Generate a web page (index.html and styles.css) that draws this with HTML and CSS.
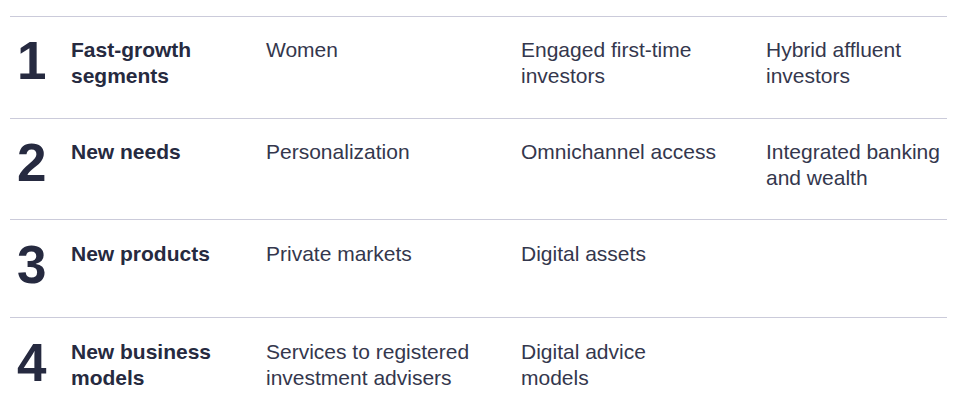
FILE: index.html
```html
<!DOCTYPE html>
<html lang="en">
<head>
<meta charset="utf-8">
<title>Growth opportunities</title>
<link rel="stylesheet" href="styles.css">
</head>
<body>
<div class="table">
  <div class="row r1">
    <div class="num">1</div>
    <div class="label">Fast-growth segments</div>
    <div class="cell c2">Women</div>
    <div class="cell c3">Engaged first-time investors</div>
    <div class="cell c4">Hybrid affluent investors</div>
  </div>
  <div class="row r2">
    <div class="num">2</div>
    <div class="label">New needs</div>
    <div class="cell c2">Personalization</div>
    <div class="cell c3">Omnichannel access</div>
    <div class="cell c4">Integrated banking and wealth</div>
  </div>
  <div class="row r3">
    <div class="num">3</div>
    <div class="label">New products</div>
    <div class="cell c2">Private markets</div>
    <div class="cell c3">Digital assets</div>
    <div class="cell c4"></div>
  </div>
  <div class="row r4">
    <div class="num">4</div>
    <div class="label">New business models</div>
    <div class="cell c2">Services to registered investment advisers</div>
    <div class="cell c3">Digital advice models</div>
    <div class="cell c4"></div>
  </div>
</div>
</body>
</html>
```
FILE: styles.css
```css
html, body {
  margin: 0;
  padding: 0;
  background: #ffffff;
}
body {
  padding: 16px 12px 0 10px;
  font-family: "Liberation Sans", Arial, sans-serif;
  color: #2a2d43;
}
.table {
  display: flex;
  flex-direction: column;
  width: 937px;
}
.row {
  display: grid;
  grid-template-columns: 61px 195px 255px 245px 181px;
  box-sizing: border-box;
  border-top: 1px solid #cbcbda;
  padding-top: 20px;
  align-items: start;
}
.r1 { height: 102px; }
.r2 { height: 101px; }
.r3 { height: 98px; padding-top: 21px; }
.r4 { height: 93px; padding-top: 21px; }
.num {
  font-size: 53px;
  font-weight: 700;
  line-height: 53px;
  padding-left: 7px;
  margin-top: -3px;
  color: #262a40;
}
.label {
  font-size: 21px;
  font-weight: 700;
  line-height: 26px;
  color: #262a40;
  padding-right: 40px;
}
.cell {
  font-size: 21px;
  line-height: 26px;
  color: #34374d;
  padding-right: 20px;
}
.c3 {
  padding-right: 50px;
}
.c4 {
  padding-right: 0;
}
```
